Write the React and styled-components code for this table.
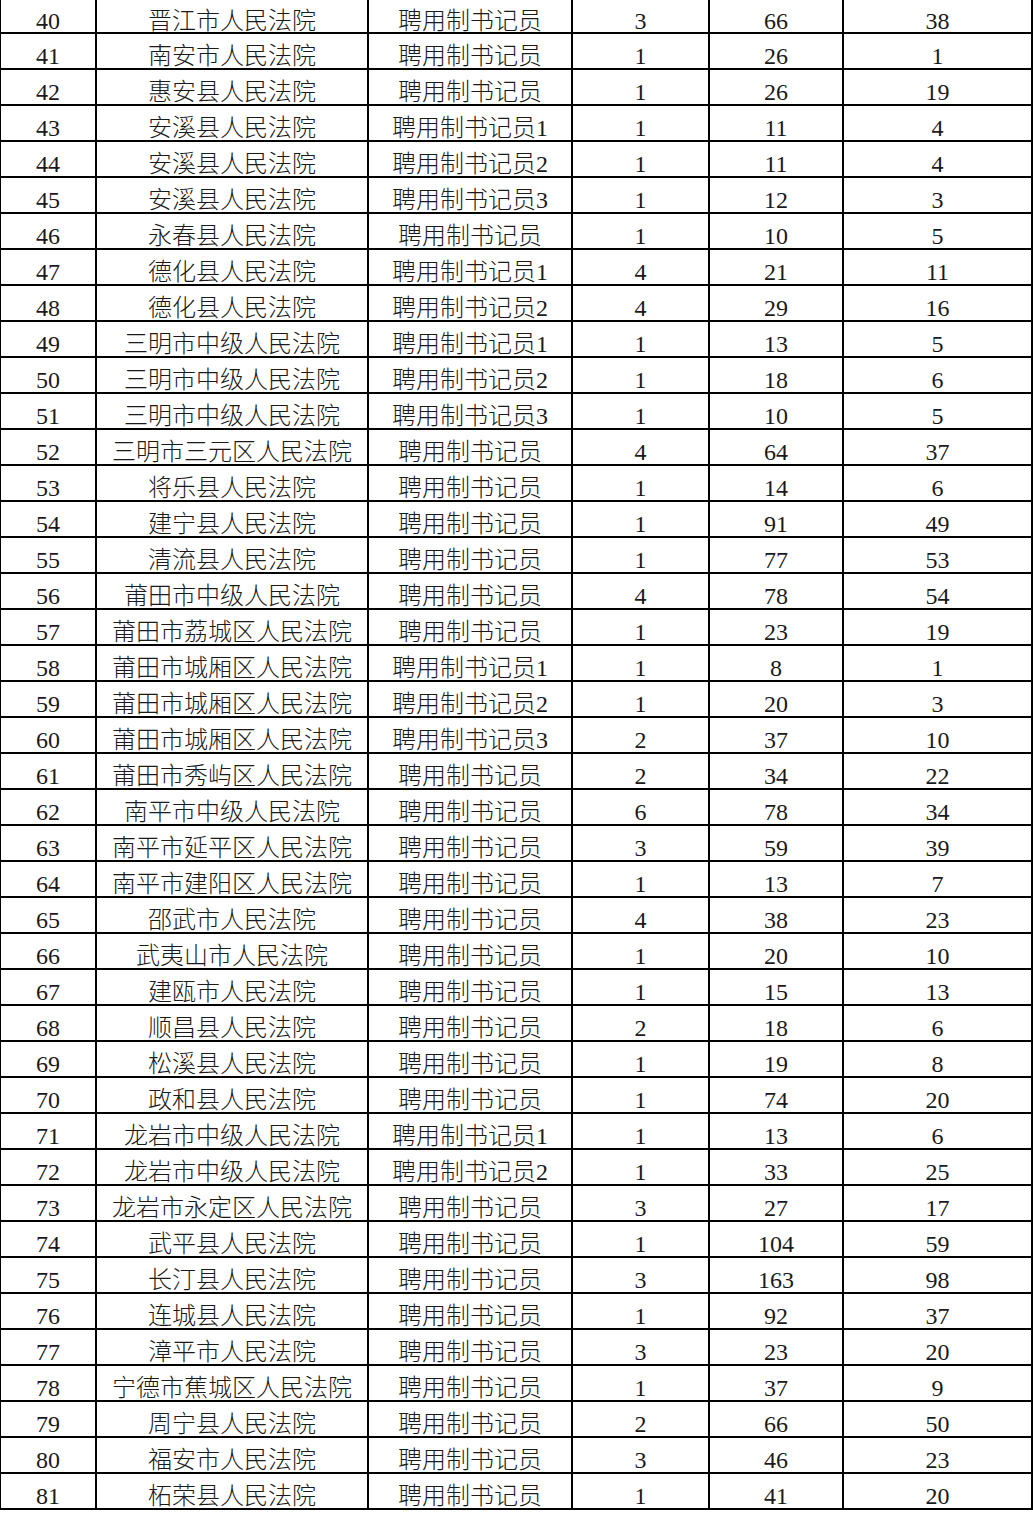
import React from "react";
import styled, { createGlobalStyle } from "styled-components";

const rows = [
  [40, "晋江市人民法院", "聘用制书记员", 3, 66, 38],
  [41, "南安市人民法院", "聘用制书记员", 1, 26, 1],
  [42, "惠安县人民法院", "聘用制书记员", 1, 26, 19],
  [43, "安溪县人民法院", "聘用制书记员1", 1, 11, 4],
  [44, "安溪县人民法院", "聘用制书记员2", 1, 11, 4],
  [45, "安溪县人民法院", "聘用制书记员3", 1, 12, 3],
  [46, "永春县人民法院", "聘用制书记员", 1, 10, 5],
  [47, "德化县人民法院", "聘用制书记员1", 4, 21, 11],
  [48, "德化县人民法院", "聘用制书记员2", 4, 29, 16],
  [49, "三明市中级人民法院", "聘用制书记员1", 1, 13, 5],
  [50, "三明市中级人民法院", "聘用制书记员2", 1, 18, 6],
  [51, "三明市中级人民法院", "聘用制书记员3", 1, 10, 5],
  [52, "三明市三元区人民法院", "聘用制书记员", 4, 64, 37],
  [53, "将乐县人民法院", "聘用制书记员", 1, 14, 6],
  [54, "建宁县人民法院", "聘用制书记员", 1, 91, 49],
  [55, "清流县人民法院", "聘用制书记员", 1, 77, 53],
  [56, "莆田市中级人民法院", "聘用制书记员", 4, 78, 54],
  [57, "莆田市荔城区人民法院", "聘用制书记员", 1, 23, 19],
  [58, "莆田市城厢区人民法院", "聘用制书记员1", 1, 8, 1],
  [59, "莆田市城厢区人民法院", "聘用制书记员2", 1, 20, 3],
  [60, "莆田市城厢区人民法院", "聘用制书记员3", 2, 37, 10],
  [61, "莆田市秀屿区人民法院", "聘用制书记员", 2, 34, 22],
  [62, "南平市中级人民法院", "聘用制书记员", 6, 78, 34],
  [63, "南平市延平区人民法院", "聘用制书记员", 3, 59, 39],
  [64, "南平市建阳区人民法院", "聘用制书记员", 1, 13, 7],
  [65, "邵武市人民法院", "聘用制书记员", 4, 38, 23],
  [66, "武夷山市人民法院", "聘用制书记员", 1, 20, 10],
  [67, "建瓯市人民法院", "聘用制书记员", 1, 15, 13],
  [68, "顺昌县人民法院", "聘用制书记员", 2, 18, 6],
  [69, "松溪县人民法院", "聘用制书记员", 1, 19, 8],
  [70, "政和县人民法院", "聘用制书记员", 1, 74, 20],
  [71, "龙岩市中级人民法院", "聘用制书记员1", 1, 13, 6],
  [72, "龙岩市中级人民法院", "聘用制书记员2", 1, 33, 25],
  [73, "龙岩市永定区人民法院", "聘用制书记员", 3, 27, 17],
  [74, "武平县人民法院", "聘用制书记员", 1, 104, 59],
  [75, "长汀县人民法院", "聘用制书记员", 3, 163, 98],
  [76, "连城县人民法院", "聘用制书记员", 1, 92, 37],
  [77, "漳平市人民法院", "聘用制书记员", 3, 23, 20],
  [78, "宁德市蕉城区人民法院", "聘用制书记员", 1, 37, 9],
  [79, "周宁县人民法院", "聘用制书记员", 2, 66, 50],
  [80, "福安市人民法院", "聘用制书记员", 3, 46, 23],
  [81, "柘荣县人民法院", "聘用制书记员", 1, 41, 20],
];

// cell widths incl. the 2px right rule
const widths = [96, 272, 204, 137, 134, 189];

const GlobalStyle = createGlobalStyle`
  html, body {
    margin: 0;
    padding: 0;
    background: #ffffff;
  }
  body {
    font-family: "Liberation Serif", "Noto Sans CJK SC", serif;
    color: #1a1a1a;
  }
`;

const Sheet = styled.div`
  width: 1033px;
  overflow: hidden;
`;

const Row = styled.div`
  display: flex;
  height: 36px;
  box-sizing: border-box;
  border-left: 1px solid #000;
  border-bottom: 2px solid #000;

  &:first-child {
    height: 34px;
  }
`;

const Cell = styled.div`
  flex: 0 0 ${(p) => p.$w}px;
  box-sizing: border-box;
  border-right: 2px solid #000;
  display: flex;
  align-items: center;
  justify-content: center;
  padding-top: 9px;
  font-size: 24px;
  font-weight: 300;
  white-space: nowrap;
  line-height: 1;
`;

const App = () => {
  return (
    <>
      <GlobalStyle />
      <Sheet>
        {rows.map((r) => (
          <Row key={r[0]}>
            {r.map((v, i) => (
              <Cell key={i} $w={widths[i]}>
                {v}
              </Cell>
            ))}
          </Row>
        ))}
      </Sheet>
    </>
  );
};

export default App;
